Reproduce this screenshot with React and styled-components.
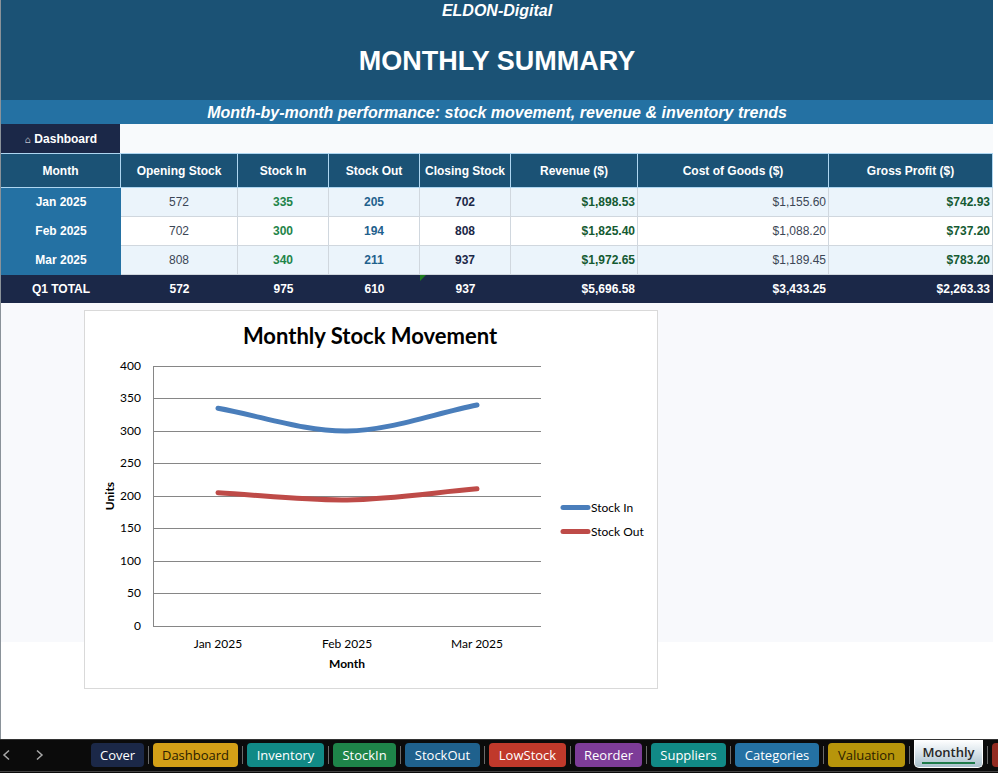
import React, { useState } from "react";
import styled, { createGlobalStyle } from "styled-components";

const GlobalStyle = createGlobalStyle`
  * {
    box-sizing: border-box;
  }
  body {
    margin: 0;
    background: #fff;
    font-family: "Liberation Sans", Arial, sans-serif;
  }
`;

const Page = styled.div`
  display: flex;
  flex-direction: column;
  min-height: 100vh;
`;
const Sheet = styled.main`
  flex: 1;
  border-left: 1px solid #8a9299;
  padding-right: 5px;
`;

// header
const Header = styled.header`
  background: #1b5275;
  color: #fff;
  text-align: center;
`;
const Brand = styled.div`
  font-size: 16px;
  font-weight: 700;
  font-style: italic;
  line-height: 22px;
`;
const Title = styled.h1`
  margin: 0;
  font-size: 27px;
  font-weight: 700;
  line-height: 78px;
`;
const Subtitle = styled.p`
  margin: 0;
  padding-top: 2px;
  background: #2471a3;
  font-size: 16px;
  font-weight: 700;
  font-style: italic;
  line-height: 22px;
`;
const LinkRow = styled.div`
  display: flex;
  background: #f8fafc;
`;
const HomeLink = styled.a`
  width: 12%;
  padding: 2px 0 0 1px;
  background: #1b2848;
  color: #fff;
  font-size: 12px;
  font-weight: 700;
  line-height: 27px;
  text-align: center;
  text-decoration: none;
  span {
    font-size: 10px;
    font-weight: 400;
  }
`;

// table
const Table = styled.table`
  width: 100%;
  table-layout: fixed;
  border-collapse: separate;
  border-spacing: 0;
  font-size: 12px;
`;
const HeadCell = styled.th`
  height: 35px;
  padding: 0;
  background: #1b5275;
  color: #fff;
  border: solid #aed6f1;
  border-width: 1px 1px 1px 0;
  white-space: nowrap;
`;
const MonthCell = styled.th`
  height: 29px;
  padding: 0;
  background: #2471a3;
  border-bottom: 1px solid #2471a3;
  color: #fff;
`;
const Cell = styled.td`
  height: 29px;
  padding: 0 2px;
  background: ${(props) => (props.$odd ? "#ebf4fb" : "#fff")};
  border: solid #d0d7de;
  border-width: 0 1px 1px 0;
  color: ${(props) => props.$color};
  font-weight: ${(props) => (props.$bold ? 700 : 400)};
  text-align: ${(props) => (props.$money ? "right" : "center")};
`;
const TotalCell = styled.td`
  position: relative;
  height: 28px;
  padding: 0 3px;
  background: #1b2848;
  color: #fff;
  font-weight: 700;
  text-align: ${(props) => (props.$money ? "right" : "center")};
`;
const ErrorMark = styled.span`
  position: absolute;
  top: 0;
  left: 0;
  border-top: 6px solid #1e7b1e;
  border-right: 6px solid transparent;
`;

// chart
const FilledArea = styled.section`
  height: 339px;
  padding: 7px 0 0 83px;
  background: #f8f9fc;
`;
const ChartCard = styled.div`
  width: 574px;
  max-width: 100%;
  background: #fff;
  border: 1px solid #d9d9d9;
  svg {
    display: block;
    width: 100%;
    font-family: Lato, Carlito, sans-serif;
    font-size: 12px;
  }
`;
const BlankArea = styled.div`
  height: 97px;
`;

// sheet tabs
const TabBar = styled.nav`
  display: flex;
  align-items: flex-start;
  height: 34px;
  overflow: hidden;
  background: #0b0b0b;
  border-top: 1px solid #333;
  box-shadow: inset 0 -1px #0b0b0b, inset 0 -2px #444;
`;
const Arrows = styled.div`
  display: flex;
  flex: none;
  width: 91px;
`;
const ArrowButton = styled.button`
  width: 32px;
  height: 32px;
  padding: 0 0 0 1px;
  border: none;
  background: none;
  color: #a8a8a8;
  text-align: left;
`;
const TabSlot = styled.div`
  display: flex;
  flex: none;
  &::after {
    content: "";
    width: 1px;
    height: 18px;
    margin: 6px 4px 0;
    background: #6a6a6a;
  }
`;
const Tab = styled.button`
  width: ${(props) => props.$width}px;
  height: 24px;
  margin-top: 3px;
  padding: 0;
  border: none;
  border-radius: 4px;
  background: ${(props) => props.$bg};
  color: ${(props) => props.$color};
  font-family: "Open Sans", "Segoe UI", sans-serif;
  font-size: 13px;
  line-height: 24px;
  white-space: nowrap;
`;
const ActiveTab = styled(Tab)`
  display: flex;
  justify-content: center;
  align-items: flex-start;
  height: 28px;
  margin-top: 0;
  border: solid #fff;
  border-width: 0 1px 1px;
  border-radius: 0 0 5px 5px;
  background: linear-gradient(#fff, #dfe8ee 40%, #a9c0cc);
  color: #262626;
  font-weight: 600;
  span {
    height: 24px;
    line-height: 24px;
    border-bottom: 2px solid #1e7b4a;
  }
`;

const columns = [
  { label: "Month", width: 120 },
  { label: "Opening Stock", width: 117, color: "#3b4656" },
  { label: "Stock In", width: 91, color: "#1e8449", bold: true },
  { label: "Stock Out", width: 91, color: "#1f618d", bold: true },
  { label: "Closing Stock", width: 91, color: "#1b2848", bold: true },
  { label: "Revenue ($)", width: 127, color: "#145a32", bold: true, money: true },
  { label: "Cost of Goods ($)", width: 191, color: "#3b4656", money: true },
  { label: "Gross Profit ($)", width: 164, color: "#145a32", bold: true, money: true },
];

const months = [
  ["Jan 2025", "572", "335", "205", "702", "$1,898.53", "$1,155.60", "$742.93"],
  ["Feb 2025", "702", "300", "194", "808", "$1,825.40", "$1,088.20", "$737.20"],
  ["Mar 2025", "808", "340", "211", "937", "$1,972.65", "$1,189.45", "$783.20"],
];
const total = ["Q1 TOTAL", "572", "975", "610", "937", "$5,696.58", "$3,433.25", "$2,263.33"];

const tabs = [
  { name: "Cover", width: 53, bg: "#1b2848" },
  { name: "Dashboard", width: 85, bg: "#d4a017", color: "#2b1d00" },
  { name: "Inventory", width: 77, bg: "#118a86" },
  { name: "StockIn", width: 63, bg: "#1e8449" },
  { name: "StockOut", width: 75, bg: "#1f618d" },
  { name: "LowStock", width: 77, bg: "#c0392b" },
  { name: "Reorder", width: 67, bg: "#7d3c98" },
  { name: "Suppliers", width: 75, bg: "#118a86" },
  { name: "Categories", width: 84, bg: "#2471a3" },
  { name: "Valuation", width: 77, bg: "#b7950b", color: "#2b1d00" },
  { name: "Monthly", width: 69, bg: "#566573" },
];

const series = [
  { name: "Stock In", color: "#4a7ebb", values: [335, 300, 340] },
  { name: "Stock Out", color: "#be4b48", values: [205, 194, 211] },
];

const chartY = (value) => 315 - value * 0.65;
const chartX = [133, 262, 392];

// smoothed line through three points
const smoothPath = (values) => {
  const [a, b, c] = values.map(chartY);
  const [ax, bx, cx] = chartX;
  const slope = (c - a) / 6;
  return `M${ax} ${a} C${ax + 43} ${a + (b - a) / 3} ${bx - 43} ${b - slope} ${bx} ${b} S${cx - 43} ${c - (c - b) / 3} ${cx} ${c}`;
};

function StockChart() {
  return (
    <svg viewBox="0 0 572 377" role="img" aria-label="Monthly Stock Movement">
      <text x="285" y="33" textAnchor="middle" fontSize="22" fontWeight="700">
        Monthly Stock Movement
      </text>
      {[0, 50, 100, 150, 200, 250, 300, 350, 400].map((value) => (
        <g key={value}>
          <path d={`M68 ${Math.floor(chartY(value)) + 0.5}H456`} stroke="#868686" />
          <text x="56" y={Math.floor(chartY(value)) + 4} textAnchor="end">
            {value}
          </text>
        </g>
      ))}
      <path d="M68.5 55V316" stroke="#868686" />
      {series.map((item, index) => (
        <g key={item.name} fill="none" stroke={item.color} strokeWidth="5" strokeLinecap="round">
          <path d={smoothPath(item.values)} />
          <path d={`M478 ${196.5 + index * 24}H503`} />
        </g>
      ))}
      {series.map((item, index) => (
        <text key={item.name} x="506" y={201 + index * 24}>
          {item.name}
        </text>
      ))}
      {months.map((row, index) => (
        <text key={row[0]} x={chartX[index]} y="337" textAnchor="middle">
          {row[0]}
        </text>
      ))}
      <text x="262" y="357" textAnchor="middle" fontWeight="700">
        Month
      </text>
      <text transform="translate(29 185) rotate(-90)" textAnchor="middle" fontWeight="700">
        Units
      </text>
    </svg>
  );
}

function App() {
  const [active, setActive] = useState("Monthly");

  return (
    <Page>
      <GlobalStyle />
      <Sheet>
        <Header>
          <Brand>ELDON-Digital</Brand>
          <Title>MONTHLY SUMMARY</Title>
          <Subtitle>Month-by-month performance: stock movement, revenue &amp; inventory trends</Subtitle>
        </Header>
        <LinkRow>
          <HomeLink href="#dashboard">
            <span>⌂</span> Dashboard
          </HomeLink>
        </LinkRow>

        <Table>
          <colgroup>
            {columns.map((col) => (
              <col key={col.label} width={col.width} />
            ))}
          </colgroup>
          <thead>
            <tr>
              {columns.map((col) => (
                <HeadCell key={col.label} scope="col">
                  {col.label}
                </HeadCell>
              ))}
            </tr>
          </thead>
          <tbody>
            {months.map((row, index) => (
              <tr key={row[0]}>
                <MonthCell scope="row">{row[0]}</MonthCell>
                {columns.slice(1).map((col, i) => (
                  <Cell key={col.label} $odd={index % 2 === 0} $color={col.color} $bold={col.bold} $money={col.money}>
                    {row[i + 1]}
                  </Cell>
                ))}
              </tr>
            ))}
          </tbody>
          <tfoot>
            <tr>
              {columns.map((col, i) => (
                <TotalCell key={col.label} $money={col.money}>
                  {col.label === "Closing Stock" && <ErrorMark />}
                  {total[i]}
                </TotalCell>
              ))}
            </tr>
          </tfoot>
        </Table>

        <FilledArea>
          <ChartCard>
            <StockChart />
          </ChartCard>
        </FilledArea>
        <BlankArea />
      </Sheet>

      <TabBar aria-label="Sheets">
        <Arrows>
          <ArrowButton aria-label="Previous sheet">
            <svg width="12" height="12" viewBox="0 0 12 12" fill="none" stroke="currentColor" strokeWidth="1.5">
              <path d="M8 1.5L3 6l5 4.5" />
            </svg>
          </ArrowButton>
          <ArrowButton aria-label="Next sheet">
            <svg width="12" height="12" viewBox="0 0 12 12" fill="none" stroke="currentColor" strokeWidth="1.5">
              <path d="M4 1.5L9 6l-5 4.5" />
            </svg>
          </ArrowButton>
        </Arrows>
        {tabs.map((tab) => (
          <TabSlot key={tab.name}>
            {tab.name === active ? (
              <ActiveTab $width={tab.width}>
                <span>{tab.name}</span>
              </ActiveTab>
            ) : (
              <Tab $width={tab.width} $bg={tab.bg} $color={tab.color || "#fff"} onClick={() => setActive(tab.name)}>
                {tab.name}
              </Tab>
            )}
          </TabSlot>
        ))}
        <TabSlot>
          <Tab $width={77} $bg="#922b21" aria-label="More sheets" />
        </TabSlot>
      </TabBar>
    </Page>
  );
}

export default App;
